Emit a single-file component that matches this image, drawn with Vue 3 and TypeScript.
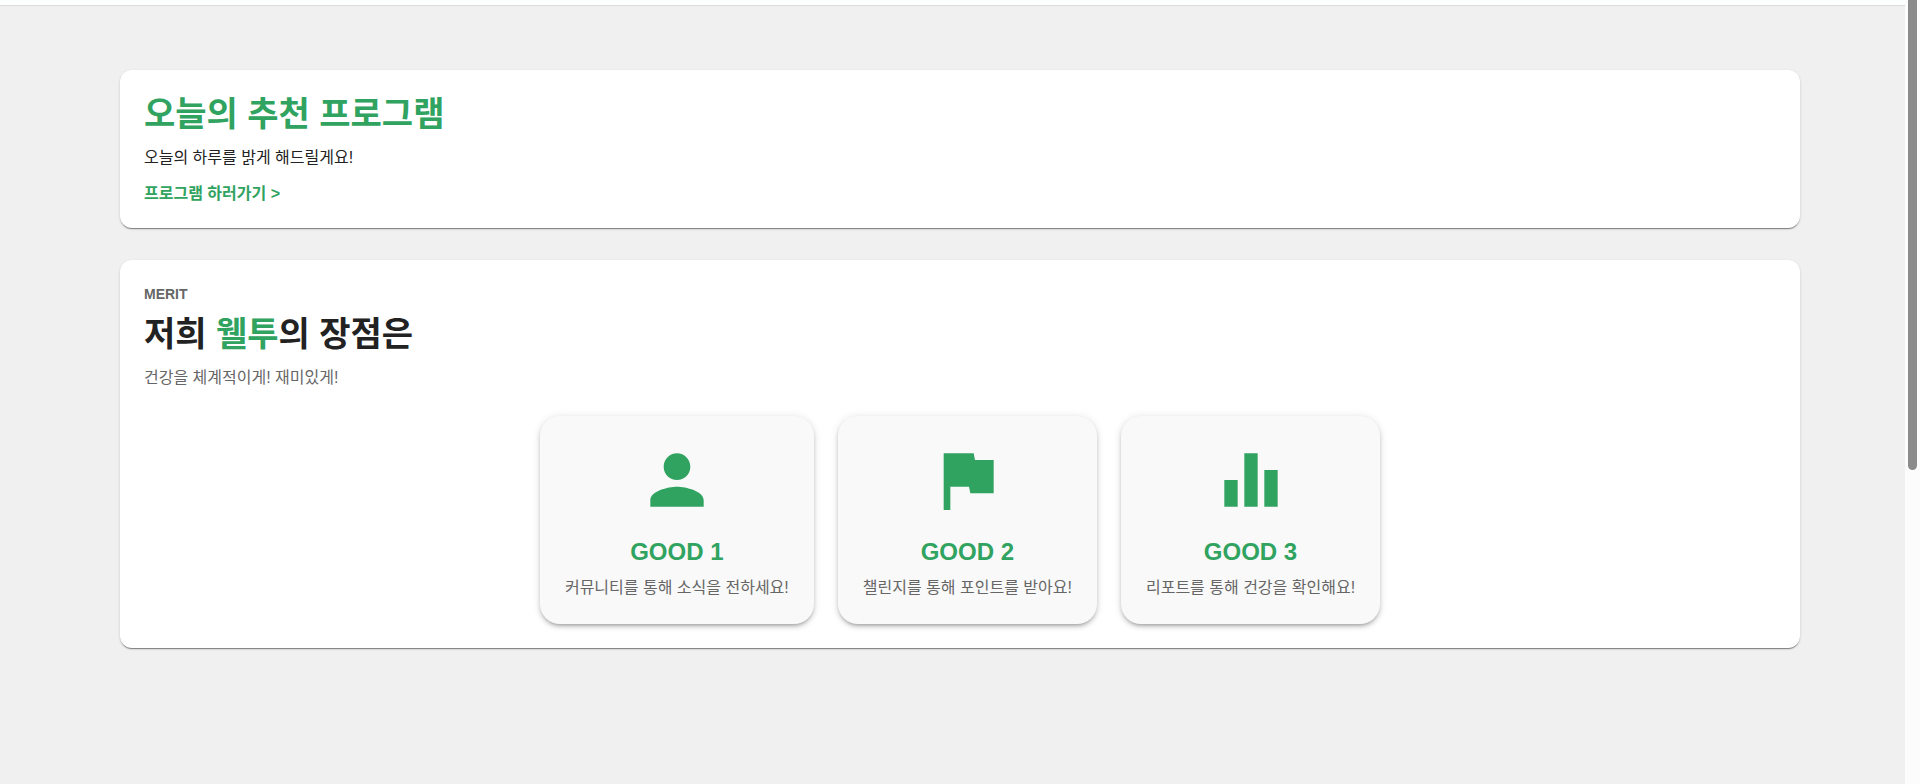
<script setup lang="ts">
interface Merit {
  title: string
  text: string
  icon: string
}

const merits: Merit[] = [
  {
    title: 'GOOD 1',
    text: '커뮤니티를 통해 소식을 전하세요!',
    icon: 'M12 12c2.21 0 4-1.79 4-4s-1.79-4-4-4-4 1.79-4 4 1.79 4 4 4m0 2c-2.67 0-8 1.34-8 4v2h16v-2c0-2.66-5.33-4-8-4',
  },
  {
    title: 'GOOD 2',
    text: '챌린지를 통해 포인트를 받아요!',
    icon: 'M14.4 6 14 4H5v17h2v-7h5.6l.4 2h7V6z',
  },
  {
    title: 'GOOD 3',
    text: '리포트를 통해 건강을 확인해요!',
    icon: 'M4 12h4v8H4zM10 4h4v16h-4zM16 9h4v11h-4z',
  },
]
</script>

<template>
  <div class="page">
    <header class="topbar"></header>
    <main class="content">
      <section class="panel">
        <h1 class="heading accent">오늘의 추천 프로그램</h1>
        <p class="body">오늘의 하루를 밝게 해드릴게요!</p>
        <a class="link accent" href="#program">프로그램 하러가기 &gt;</a>
      </section>

      <section class="panel">
        <p class="overline">MERIT</p>
        <h2 class="heading">저희 <span class="accent">웰투</span>의 장점은</h2>
        <p class="body muted">건강을 체계적이게! 재미있게!</p>
        <div class="cards">
          <article v-for="merit in merits" :key="merit.title" class="card">
            <svg class="icon" viewBox="0 0 24 24" aria-hidden="true">
              <path :d="merit.icon" />
            </svg>
            <h3 class="card-title accent">{{ merit.title }}</h3>
            <p class="body muted">{{ merit.text }}</p>
          </article>
        </div>
      </section>
    </main>
    <div class="scrollbar" aria-hidden="true"><div class="thumb"></div></div>
  </div>
</template>

<style>
body {
  margin: 0;
}
</style>

<style scoped>
.page {
  position: relative;
  box-sizing: border-box;
  min-height: 100vh;
  background: #f0f0f0;
  color: #222;
  font-family: "Liberation Sans", "Noto Sans CJK KR", sans-serif;
}

.topbar {
  height: 5px;
  background: #fcfffe;
  border-bottom: 1px solid #dcdcdc;
}

.content {
  display: flex;
  flex-direction: column;
  gap: 32px;
  padding: 64px 120px;
}

.panel {
  padding: 24px;
  border-radius: 12px;
  background: #fff;
  box-shadow: 0 2px 1px -1px rgba(0, 0, 0, 0.3), 0 1px 1px rgba(0, 0, 0, 0.18), 0 1px 3px rgba(0, 0, 0, 0.12);
}

.heading,
.body,
.overline,
.card-title {
  margin: 0;
}

.heading {
  margin-bottom: 12px;
  font-size: 34px;
  font-weight: 700;
  line-height: 40px;
}

.body {
  font-size: 16px;
  line-height: 24px;
}

.link {
  display: block;
  width: fit-content;
  margin-top: 14px;
  font-size: 16px;
  font-weight: 700;
  line-height: 20px;
  text-decoration: none;
}

.accent {
  color: #30a360;
}

.muted {
  color: #666;
}

.overline {
  margin-bottom: 10px;
  color: #666;
  font-size: 14px;
  font-weight: 700;
  line-height: 20px;
}

.cards {
  display: flex;
  flex-wrap: wrap;
  justify-content: center;
  gap: 24px;
  margin-top: 26px;
}

.card {
  display: flex;
  flex-direction: column;
  align-items: center;
  padding: 24px 25px;
  border-radius: 20px;
  background: #f9f9f9;
  box-shadow: 0 3px 3px -2px rgba(0, 0, 0, 0.2), 0 3px 4px rgba(0, 0, 0, 0.14), 0 1px 8px rgba(0, 0, 0, 0.12);
}

.icon {
  width: 80px;
  height: 80px;
  margin-bottom: 16px;
  fill: #30a360;
}

.card-title {
  margin-bottom: 8px;
  font-size: 24px;
  font-weight: 700;
  line-height: 32px;
}

.scrollbar {
  position: absolute;
  top: 0;
  right: 0;
  bottom: 0;
  width: 15px;
  background: #fcfcfc;
}

.thumb {
  width: 9px;
  height: 60%;
  margin: 0 3px;
  border-radius: 0 0 5px 5px;
  background: #8b8b8b;
}
</style>
